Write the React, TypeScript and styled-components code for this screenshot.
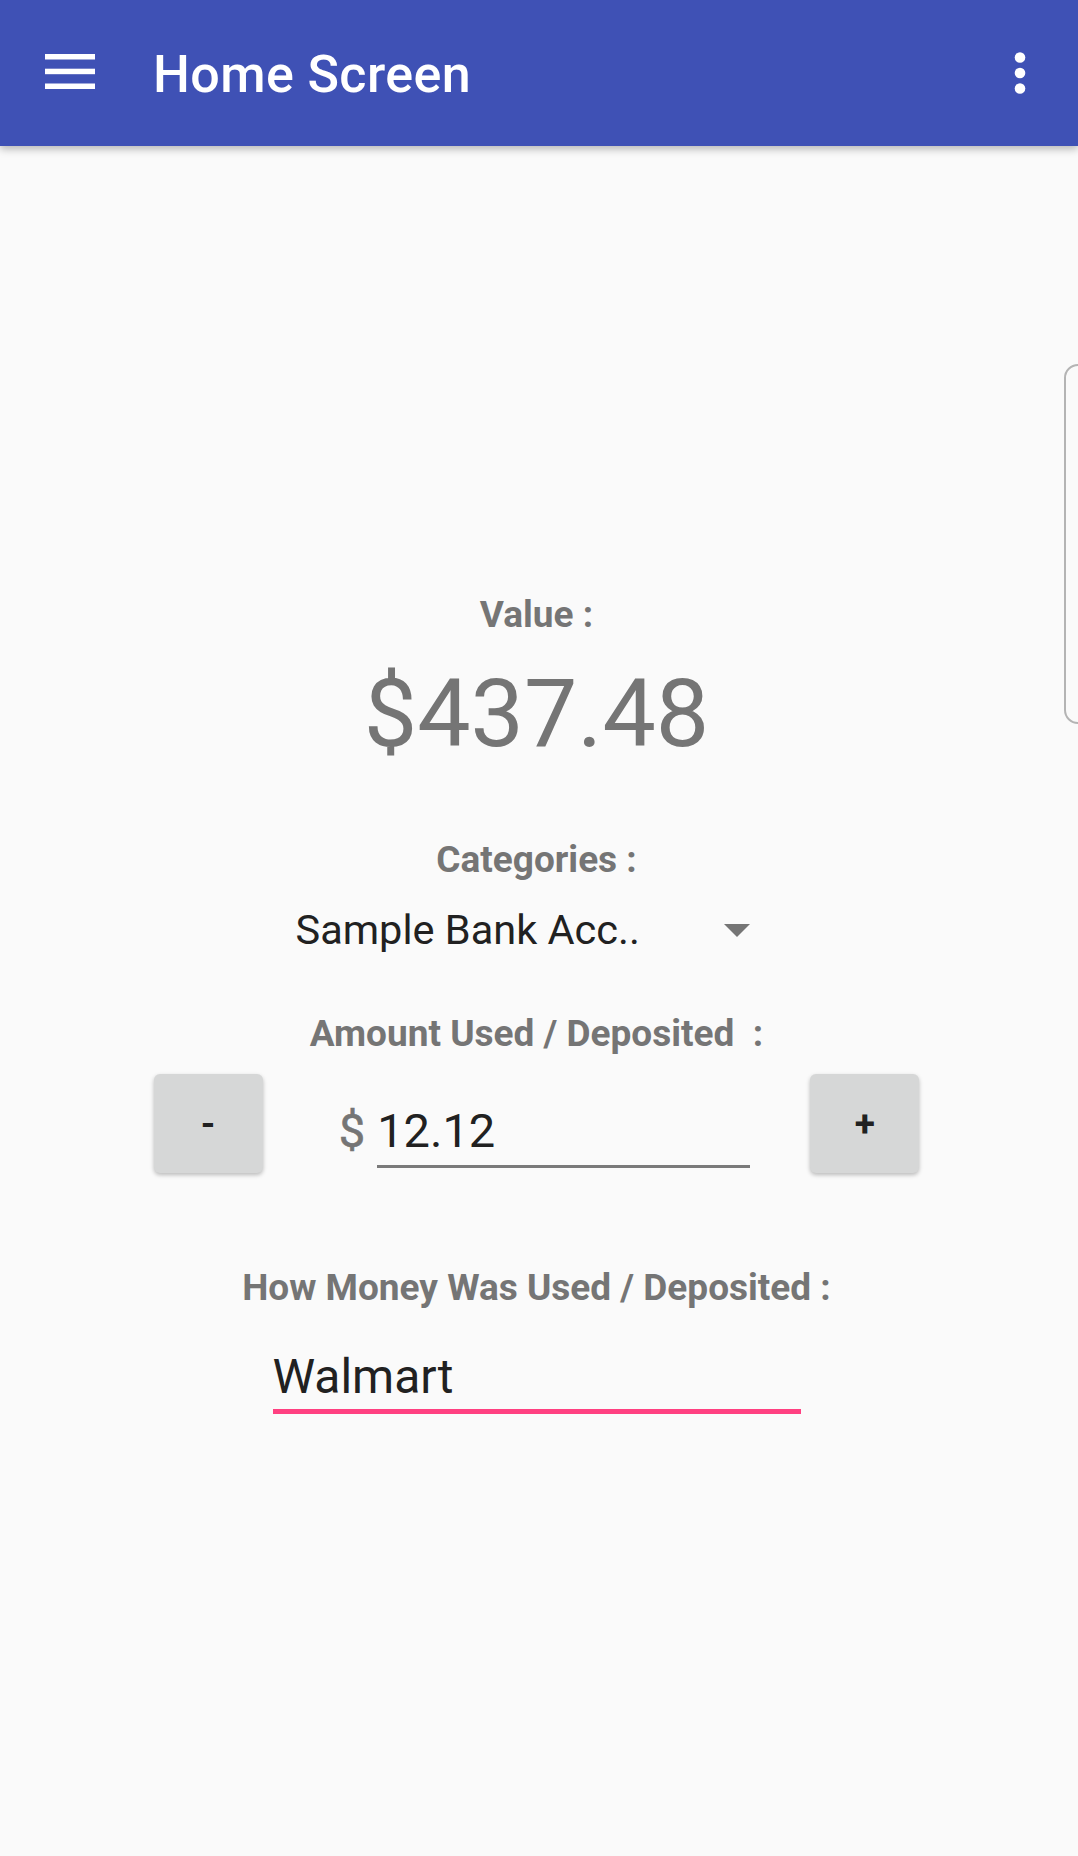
import React from 'react'
import styled, { createGlobalStyle } from 'styled-components'

const GlobalStyle = createGlobalStyle`
  html, body {
    margin: 0;
    padding: 0;
    background: #fafafa;
  }
  body {
    font-family: Roboto, "Noto Sans", "Liberation Sans", sans-serif;
    -webkit-font-smoothing: antialiased;
  }
`

const Screen = styled.div`
  position: relative;
  min-height: 1856px;
  background: #fafafa;
  overflow: hidden;
`

const Toolbar = styled.header`
  display: flex;
  align-items: center;
  height: 146px;
  padding: 0 52px 0 45px;
  background: #3f51b5;
  box-shadow: 0 3px 8px rgba(0, 0, 0, 0.28);
  position: relative;
  z-index: 1;
`

const Title = styled.h1`
  flex: 1;
  margin: 4px 0 0 58px;
  font-size: 52px;
  line-height: 60px;
  font-weight: 500;
  letter-spacing: 0.4px;
  color: #fff;
`

const MenuIcon = styled.svg`
  display: block;
  margin-bottom: 3px;
`

const Content = styled.main`
  display: flex;
  flex-direction: column;
  align-items: center;
  padding: 447px 5px 0 0;
`

const Label = styled.div<{ $gap: number }>`
  margin-top: ${p => p.$gap}px;
  font-size: 37px;
  line-height: 44px;
  font-weight: 700;
  color: #757575;
  white-space: pre;
`

const BigValue = styled.div`
  margin-top: 21px;
  font-size: 95px;
  line-height: 112px;
  color: #757575;
`

const Spinner = styled.div`
  display: flex;
  align-items: center;
  justify-content: space-between;
  width: 482px;
  height: 50px;
  margin-top: 23px;
  font-size: 41.5px;
  line-height: 50px;
  color: #212121;
`

const Caret = styled.span`
  width: 0;
  height: 0;
  margin-right: 28px;
  border-left: 13px solid transparent;
  border-right: 13px solid transparent;
  border-top: 13px solid #757575;
`

const StepperRow = styled.div`
  display: flex;
  align-items: flex-start;
  width: 766px;
  margin-top: 18px;
`

const StepButton = styled.button`
  width: 110px;
  height: 99px;
  padding: 0;
  border: none;
  border-radius: 6px;
  background: #d6d7d7;
  box-shadow: 0 2px 4px rgba(0, 0, 0, 0.26);
  font-family: inherit;
  font-size: 37px;
  font-weight: 700;
  color: #212121;
`

const AmountField = styled.div`
  display: flex;
  align-items: flex-start;
  margin: 29px 60px 0 76px;
  flex: 1;
`

const Dollar = styled.span`
  font-size: 47px;
  line-height: 56px;
  color: #757575;
  margin-right: 12px;
  -webkit-text-stroke: 0.6px #757575;
`

const TextInput = styled.input<{ $accent?: boolean }>`
  display: block;
  box-sizing: content-box;
  margin: 0;
  padding: 0 0 ${p => (p.$accent ? 4 : 6)}px;
  border: none;
  border-bottom: ${p => (p.$accent ? '5px solid #ff4081' : '3px solid #7a7a7a')};
  background: transparent;
  outline: none;
  font-family: inherit;
  font-size: ${p => (p.$accent ? 48 : 47)}px;
  line-height: 56px;
  height: 56px;
  color: #212121;
`

const EdgeHandle = styled.div`
  position: absolute;
  top: 364px;
  left: 1064px;
  width: 40px;
  height: 356px;
  border: 2px solid #b4b4b4;
  border-radius: 14px;
`

export default function App() {
  return (
    <Screen>
      <GlobalStyle />
      <Toolbar>
        <MenuIcon width="50" height="35" viewBox="0 0 50 35">
          <rect x="0" y="0" width="50" height="5.5" fill="#fff" />
          <rect x="0" y="14.7" width="50" height="5.5" fill="#fff" />
          <rect x="0" y="29.5" width="50" height="5.5" fill="#fff" />
        </MenuIcon>
        <Title>Home Screen</Title>
        <svg width="12" height="43" viewBox="0 0 12 43">
          <circle cx="6" cy="5.5" r="5.3" fill="#fff" />
          <circle cx="6" cy="21" r="5.3" fill="#fff" />
          <circle cx="6" cy="36.5" r="5.3" fill="#fff" />
        </svg>
      </Toolbar>

      <Content>
        <Label $gap={0}>Value :</Label>
        <BigValue>$437.48</BigValue>

        <Label $gap={68}>Categories :</Label>
        <Spinner>
          <span>Sample Bank Acc..</span>
          <Caret />
        </Spinner>

        <Label $gap={57}>{'Amount Used / Deposited  :'}</Label>
        <StepperRow>
          <StepButton>-</StepButton>
          <AmountField>
            <Dollar>$</Dollar>
            <TextInput defaultValue="12.12" style={{ width: 373 }} />
          </AmountField>
          <StepButton>+</StepButton>
        </StepperRow>

        <Label $gap={93}>How Money Was Used / Deposited :</Label>
        <div style={{ marginTop: 39 }}>
          <TextInput $accent defaultValue="Walmart" style={{ width: 528 }} />
        </div>
      </Content>

      <EdgeHandle />
    </Screen>
  )
}
